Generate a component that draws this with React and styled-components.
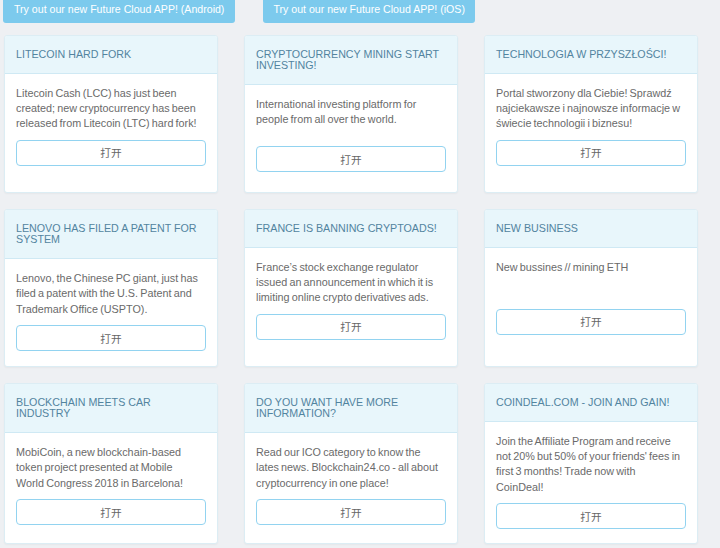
import React from "react";
import styled, { createGlobalStyle } from "styled-components";

const GlobalStyle = createGlobalStyle`
  html, body {
    margin: 0;
    padding: 0;
    background: #eef0f3;
    font-family: "Liberation Sans", Arial, "Noto Sans CJK SC", sans-serif;
  }
`;

const Page = styled.div`
  width: 720px;
  height: 548px;
  overflow: hidden;
  box-sizing: border-box;
`;

const AppBar = styled.div`
  display: flex;
  gap: 28px;
  padding-left: 3px;
`;

const AppButton = styled.a`
  display: block;
  height: 23px;
  box-sizing: border-box;
  padding: 0 ${(p) => p.$pad}px 4px;
  line-height: 19px;
  background: #7ccaed;
  color: #fff;
  font-size: 10.6px;
  border-radius: 0 0 3px 3px;
  text-decoration: none;
  white-space: nowrap;
`;

const Grid = styled.div`
  display: grid;
  grid-template-columns: repeat(3, 214px);
  column-gap: 26px;
  row-gap: 16px;
  margin-top: 12px;
  padding-left: 4px;
`;

const Card = styled.div`
  min-height: 158px;
  box-sizing: border-box;
  background: #fff;
  border: 1px solid #dcedf4;
  border-radius: 3px;
  box-shadow: 0 1px 2px rgba(0, 0, 0, 0.04);
  display: flex;
  flex-direction: column;
  overflow: hidden;
`;

const CardHeader = styled.div`
  background: #e8f6fb;
  border-bottom: 1px solid #cfe9f4;
  padding: 12.5px 11px;
`;

const Title = styled.h3`
  margin: 0;
  font-size: 10.7px;
  font-weight: 400;
  line-height: 11.5px;
  color: #52849f;
  text-transform: uppercase;
`;

const CardBody = styled.div`
  padding: 12px 11px 14px;
`;

const Text = styled.p`
  margin: 0;
  max-width: 185.5px;
  min-height: 41px;
  font-size: 10.8px;
  word-spacing: -0.8px;
  line-height: 15.4px;
  color: #6a6a6a;
`;

const OpenButton = styled.button`
  display: block;
  width: 100%;
  height: 26px;
  margin-top: 8px;
  background: #fff;
  border: 1px solid #92d3f0;
  border-radius: 4px;
  color: #666;
  font-family: "Liberation Sans", "Noto Sans CJK SC", sans-serif;
  font-size: 10.7px;
  cursor: pointer;
`;

const cards = [
  {
    title: "Litecoin hard fork",
    text: "Litecoin Cash (LCC) has just been created; new cryptocurrency has been released from Litecoin (LTC) hard fork!",
  },
  {
    title: "Cryptocurrency mining start investing!",
    text: "International investing platform for people from all over the world.",
  },
  {
    title: "Technologia w przyszłości!",
    text: "Portal stworzony dla Ciebie! Sprawdź najciekawsze i najnowsze informacje w świecie technologii i biznesu!",
  },
  {
    title: "Lenovo has filed a patent for system",
    text: "Lenovo, the Chinese PC giant, just has filed a patent with the U.S. Patent and Trademark Office (USPTO).",
  },
  {
    title: "France is banning cryptoads!",
    text: "France’s stock exchange regulator issued an announcement in which it is limiting online crypto derivatives ads.",
  },
  {
    title: "New business",
    text: "New bussines // mining ETH",
  },
  {
    title: "Blockchain meets car industry",
    text: "MobiCoin, a new blockchain-based token project presented at Mobile World Congress 2018 in Barcelona!",
  },
  {
    title: "Do you want have more information?",
    text: "Read our ICO category to know the lates news. Blockchain24.co - all about cryptocurrency in one place!",
  },
  {
    title: "Coindeal.com - join and gain!",
    text: "Join the Affiliate Program and receive not 20% but 50% of your friends' fees in first 3 months! Trade now with CoinDeal!",
  },
];

export default function App() {
  return (
    <Page>
      <GlobalStyle />
      <AppBar>
        <AppButton href="#" $pad={11}>
          Try out our new Future Cloud APP! (Android)
        </AppButton>
        <AppButton href="#" $pad={10}>
          Try out our new Future Cloud APP! (iOS)
        </AppButton>
      </AppBar>
      <Grid>
        {cards.map((c) => (
          <Card key={c.title}>
            <CardHeader>
              <Title>{c.title}</Title>
            </CardHeader>
            <CardBody>
              <Text>{c.text}</Text>
              <OpenButton>打开</OpenButton>
            </CardBody>
          </Card>
        ))}
      </Grid>
    </Page>
  );
}
